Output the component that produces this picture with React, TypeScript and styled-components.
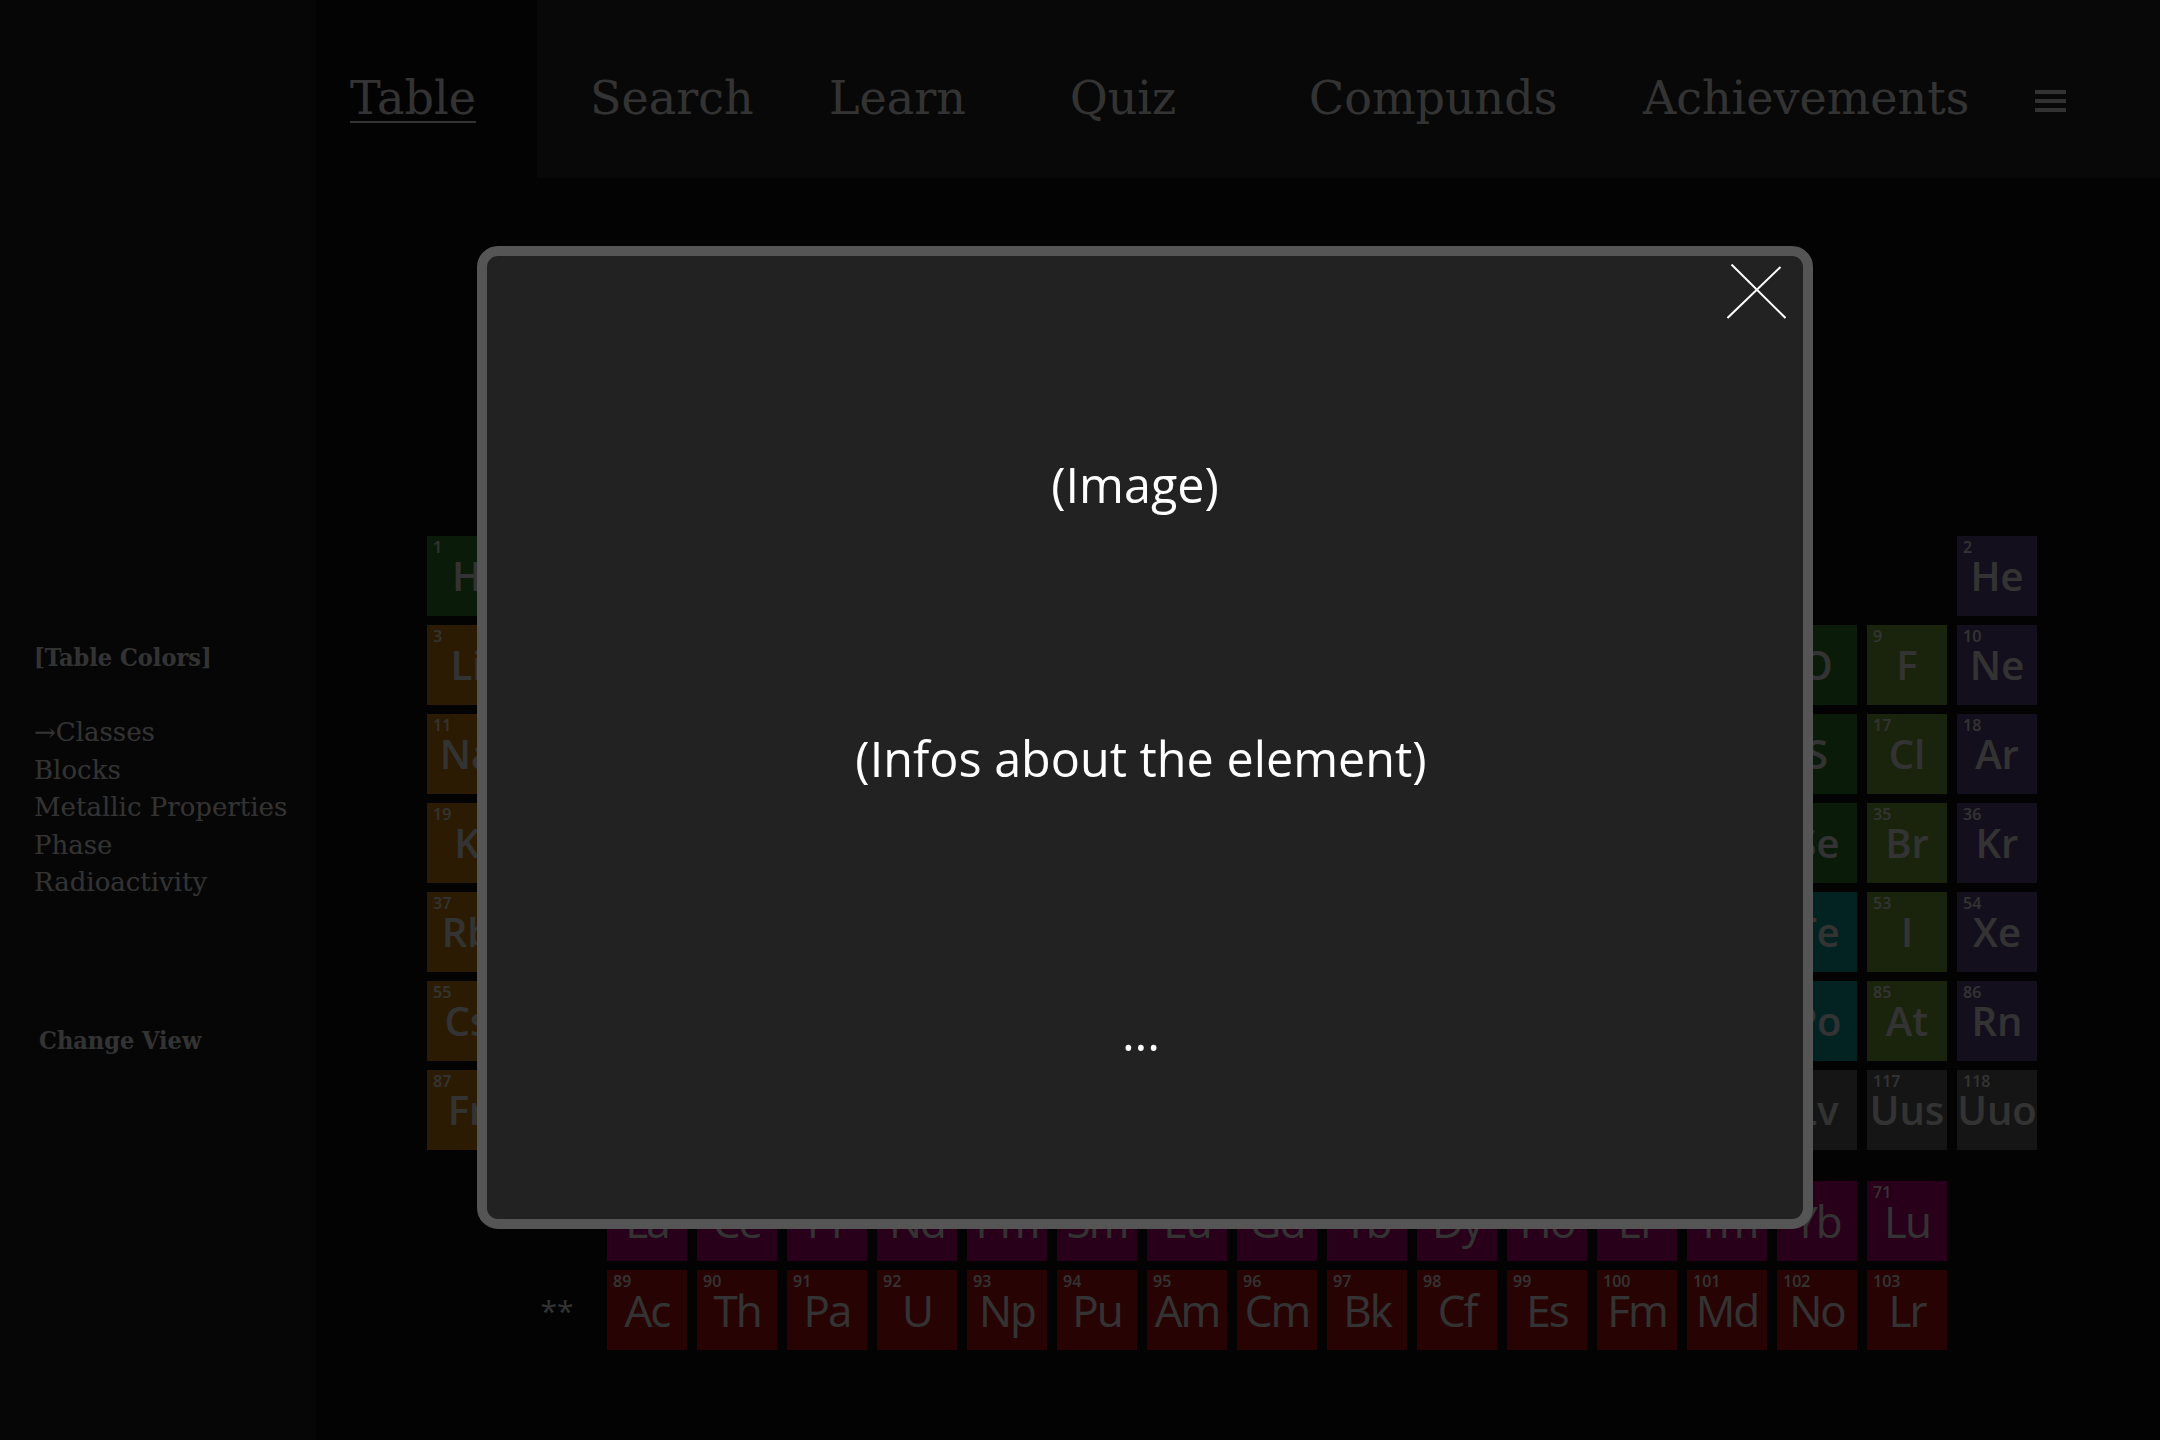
import styled, { createGlobalStyle } from 'styled-components'

// ── Data ──────────────────────────────────────────────────────────────────────

type Cat =
  | 'alkali' | 'alkaline' | 'transition' | 'post' | 'metalloid'
  | 'nonmetal' | 'halogen' | 'noble' | 'lanth' | 'act' | 'unknown' | 'marker'

const CAT_COLOR: Record<Cat, string> = {
  alkali:     '#d6870e',
  alkaline:   '#c8b000',
  transition: '#3c78c8',
  post:       '#7a7a9a',
  metalloid:  '#10a8a8',
  nonmetal:   '#358535',
  halogen:    '#84b23c',
  noble:      '#664c8e',
  lanth:      '#c8007e',
  act:        '#c41010',
  unknown:    '#6a6a6a',
  marker:     'transparent',
}

interface El { n: number; s: string; row: number; col: number; cat: Cat }

// [col, num, sym, cat] per period
const RAW: [number, number, string, Cat][][] = [
  [[1, 1, 'H', 'nonmetal'], [18, 2, 'He', 'noble']],
  [[1, 3, 'Li', 'alkali'], [2, 4, 'Be', 'alkaline'], [13, 5, 'B', 'metalloid'], [14, 6, 'C', 'nonmetal'],
   [15, 7, 'N', 'nonmetal'], [16, 8, 'O', 'nonmetal'], [17, 9, 'F', 'halogen'], [18, 10, 'Ne', 'noble']],
  [[1, 11, 'Na', 'alkali'], [2, 12, 'Mg', 'alkaline'], [13, 13, 'Al', 'post'], [14, 14, 'Si', 'metalloid'],
   [15, 15, 'P', 'nonmetal'], [16, 16, 'S', 'nonmetal'], [17, 17, 'Cl', 'halogen'], [18, 18, 'Ar', 'noble']],
]

const T4 = 'Sc Ti V Cr Mn Fe Co Ni Cu Zn'.split(' ')
const T5 = 'Y Zr Nb Mo Tc Ru Rh Pd Ag Cd'.split(' ')
const T6 = 'Hf Ta W Re Os Ir Pt Au Hg'.split(' ')
const T7 = 'Rf Db Sg Bh Hs Mt Ds Rg Cn'.split(' ')

const series = (syms: string[], col: number, num: number): [number, number, string, Cat][] =>
  syms.map((s, i) => [col + i, num + i, s, 'transition'])

RAW.push([
  [1, 19, 'K', 'alkali'], [2, 20, 'Ca', 'alkaline'], ...series(T4, 3, 21),
  [13, 31, 'Ga', 'post'], [14, 32, 'Ge', 'metalloid'], [15, 33, 'As', 'metalloid'],
  [16, 34, 'Se', 'nonmetal'], [17, 35, 'Br', 'halogen'], [18, 36, 'Kr', 'noble'],
])
RAW.push([
  [1, 37, 'Rb', 'alkali'], [2, 38, 'Sr', 'alkaline'], ...series(T5, 3, 39),
  [13, 49, 'In', 'post'], [14, 50, 'Sn', 'post'], [15, 51, 'Sb', 'metalloid'],
  [16, 52, 'Te', 'metalloid'], [17, 53, 'I', 'halogen'], [18, 54, 'Xe', 'noble'],
])
RAW.push([
  [1, 55, 'Cs', 'alkali'], [2, 56, 'Ba', 'alkaline'], [3, 0, '*', 'marker'], ...series(T6, 4, 72),
  [13, 81, 'Tl', 'post'], [14, 82, 'Pb', 'post'], [15, 83, 'Bi', 'post'],
  [16, 84, 'Po', 'metalloid'], [17, 85, 'At', 'halogen'], [18, 86, 'Rn', 'noble'],
])
RAW.push([
  [1, 87, 'Fr', 'alkali'], [2, 88, 'Ra', 'alkaline'], [3, 0, '**', 'marker'], ...series(T7, 4, 104),
  [13, 113, 'Uut', 'unknown'], [14, 114, 'Fl', 'unknown'], [15, 115, 'Uup', 'unknown'],
  [16, 116, 'Lv', 'unknown'], [17, 117, 'Uus', 'unknown'], [18, 118, 'Uuo', 'unknown'],
])

const MAIN: El[] = RAW.flatMap((period, r) =>
  period.map(([col, n, s, cat]) => ({ n, s, row: r + 1, col, cat })),
)

const LANTH = 'La Ce Pr Nd Pm Sm Eu Gd Tb Dy Ho Er Tm Yb Lu'.split(' ')
const ACT   = 'Ac Th Pa U Np Pu Am Cm Bk Cf Es Fm Md No Lr'.split(' ')

const FBLOCK: El[] = [
  { n: 0, s: '*', row: 1, col: 2, cat: 'marker' },
  ...LANTH.map((s, i) => ({ n: 57 + i, s, row: 1, col: 3 + i, cat: 'lanth' as Cat })),
  { n: 0, s: '**', row: 2, col: 2, cat: 'marker' },
  ...ACT.map((s, i) => ({ n: 89 + i, s, row: 2, col: 3 + i, cat: 'act' as Cat })),
]

const NAV = [
  { label: 'Table',        w: 221, pl: 34, active: true },
  { label: 'Search',       w: 258, pl: 53 },
  { label: 'Learn',        w: 241, pl: 34 },
  { label: 'Quiz',         w: 239, pl: 34 },
  { label: 'Compunds',     w: 334, pl: 34 },
  { label: 'Achievements', w: 392, pl: 34 },
]

const COLOR_MODES = ['→Classes', 'Blocks', 'Metallic Properties', 'Phase', 'Radioactivity']

// ── Styled ────────────────────────────────────────────────────────────────────

const GlobalStyle = createGlobalStyle`
  html, body { margin: 0; padding: 0; background: #000; }
  body { width: 2160px; height: 1440px; overflow: hidden; }
  * { box-sizing: border-box; }
`

const slab = `"DejaVu Serif", serif`
const slabBold = `"DejaVu Serif Condensed", "DejaVu Serif", serif`
const sans = `"Open Sans", "Noto Sans", sans-serif`

const Page = styled.div`
  display: grid;
  grid-template-columns: 316px 1fr;
  width: 2160px;
  height: 1440px;
  background: #101010;
`

const Sidebar = styled.aside`
  background: #1f1f1f;
  display: flex;
  flex-direction: column;
  padding: 641px 0 0 34px;
  font-family: ${slab};
  color: #fff;
`

const SideTitle = styled.div<{ $indent?: number }>`
  font-family: ${slabBold};
  font-size: 25px;
  font-weight: 700;
  line-height: 34px;
  padding-left: ${(p) => p.$indent ?? 0}px;
  white-space: nowrap;
`

const ModeList = styled.ul`
  list-style: none;
  margin: 39px 0 0;
  padding: 0;
`

const ModeItem = styled.li`
  font-size: 26px;
  line-height: 37.5px;
  white-space: nowrap;
`

const ChangeView = styled(SideTitle)`
  margin-top: 122px;
`

const Main = styled.main`
  display: flex;
  flex-direction: column;
`

const Nav = styled.nav`
  height: 178px;
  display: flex;
  background: #282828;
  font-family: ${slab};
`

const Tab = styled.div<{ $w: number; $pl: number; $active?: boolean }>`
  width: ${(p) => p.$w}px;
  flex-shrink: 0;
  padding: 75px 0 0 ${(p) => p.$pl}px;
  font-size: 46px;
  line-height: 1;
  color: #fff;
  white-space: nowrap;
  background: ${(p) => (p.$active ? '#101010' : 'transparent')};
  text-decoration: ${(p) => (p.$active ? 'underline' : 'none')};
  text-decoration-thickness: 2px;
  text-underline-offset: 7px;
`

const MenuButton = styled.div`
  padding: 90px 0 0 34px;
`

const TableArea = styled.section`
  padding: 358px 0 0 111px;
  display: flex;
  flex-direction: column;
  gap: 31px;
`

const Grid = styled.div<{ $rows: number }>`
  display: grid;
  grid-template-columns: repeat(18, 80px);
  grid-template-rows: repeat(${(p) => p.$rows}, 80px);
  column-gap: 10px;
  row-gap: 9px;
`

const Tile = styled.div<{ $cat: Cat; $row: number; $col: number }>`
  grid-row: ${(p) => p.$row};
  grid-column: ${(p) => p.$col};
  background: ${(p) => CAT_COLOR[p.$cat]};
  color: #fff;
  font-family: ${sans};
  padding: 3px 0 0 6px;
  display: flex;
  flex-direction: column;
`

const Num = styled.span`
  font-size: 16px;
  line-height: 16px;
  font-weight: 600;
`

const Sym = styled.span<{ $narrow?: boolean }>`
  margin: 1px 0 0 -6px;
  text-align: center;
  font-size: ${(p) => (p.$narrow ? 44 : 40)}px;
  line-height: 40px;
  font-weight: ${(p) => (p.$narrow ? 400 : 600)};
  letter-spacing: ${(p) => (p.$narrow ? '-2px' : '0')};
  white-space: nowrap;
`

const Marker = styled.div<{ $row: number; $col: number }>`
  grid-row: ${(p) => p.$row};
  grid-column: ${(p) => p.$col};
  display: flex;
  align-items: center;
  justify-content: center;
  font-family: ${sans};
  font-size: 30px;
  color: #fff;
`

// ── Modal ─────────────────────────────────────────────────────────────────────

const Backdrop = styled.div`
  position: fixed;
  inset: 0;
  background: rgba(0, 0, 0, 0.8);
  z-index: 10;
`

const Modal = styled.div`
  position: fixed;
  left: 477px;
  top: 246px;
  width: 1336px;
  height: 983px;
  border: 10px solid #555;
  border-radius: 21px;
  background: #222;
  z-index: 11;
  display: flex;
  flex-direction: column;
  align-items: center;
  padding-top: 196px;
  gap: 209px;
  font-family: ${sans};
  color: #fff;
`

const ModalText = styled.div<{ $shift?: number }>`
  font-size: 48.5px;
  line-height: 65px;
  margin-right: ${(p) => 8 + (p.$shift ?? 0)}px;
`

const CloseButton = styled.button`
  position: absolute;
  top: 8px;
  right: 17px;
  padding: 0;
  border: 0;
  background: none;
  line-height: 0;
  cursor: pointer;
`

// ── Components ────────────────────────────────────────────────────────────────

function Element({ el, narrow }: { el: El; narrow?: boolean }) {
  if (el.cat === 'marker') {
    return <Marker $row={el.row} $col={el.col}>{el.s}</Marker>
  }
  return (
    <Tile $cat={el.cat} $row={el.row} $col={el.col}>
      <Num>{el.n}</Num>
      <Sym $narrow={narrow}>{el.s}</Sym>
    </Tile>
  )
}

export default function App() {
  return (
    <>
      <GlobalStyle />
      <Page>
        <Sidebar>
          <SideTitle>[Table Colors]</SideTitle>
          <ModeList>
            {COLOR_MODES.map((m) => <ModeItem key={m}>{m}</ModeItem>)}
          </ModeList>
          <ChangeView $indent={5}>Change View</ChangeView>
        </Sidebar>

        <Main>
          <Nav>
            {NAV.map((t) => (
              <Tab key={t.label} $w={t.w} $pl={t.pl} $active={t.active}>{t.label}</Tab>
            ))}
            <MenuButton>
              <svg width="31" height="22" viewBox="0 0 31 22">
                <rect x="0" y="0" width="31" height="4" fill="#fff" />
                <rect x="0" y="9" width="31" height="4" fill="#fff" />
                <rect x="0" y="18" width="31" height="4" fill="#fff" />
              </svg>
            </MenuButton>
          </Nav>

          <TableArea>
            <Grid $rows={7}>
              {MAIN.map((el) => <Element key={`${el.row}-${el.col}`} el={el} />)}
            </Grid>
            <Grid $rows={2}>
              {FBLOCK.map((el) => <Element key={`f${el.row}-${el.col}`} el={el} narrow />)}
            </Grid>
          </TableArea>
        </Main>
      </Page>

      <Backdrop />
      <Modal>
        <CloseButton aria-label="Close">
          <svg width="59" height="55" viewBox="0 0 59 55">
            <line x1="0.5" y1="54" x2="53.5" y2="3" stroke="#fff" strokeWidth="2" />
            <line x1="4.5" y1="0.5" x2="58.5" y2="54" stroke="#fff" strokeWidth="2" />
          </svg>
        </CloseButton>
        <ModalText $shift={12}>(Image)</ModalText>
        <ModalText>(Infos about the element)</ModalText>
        <ModalText>...</ModalText>
      </Modal>
    </>
  )
}
